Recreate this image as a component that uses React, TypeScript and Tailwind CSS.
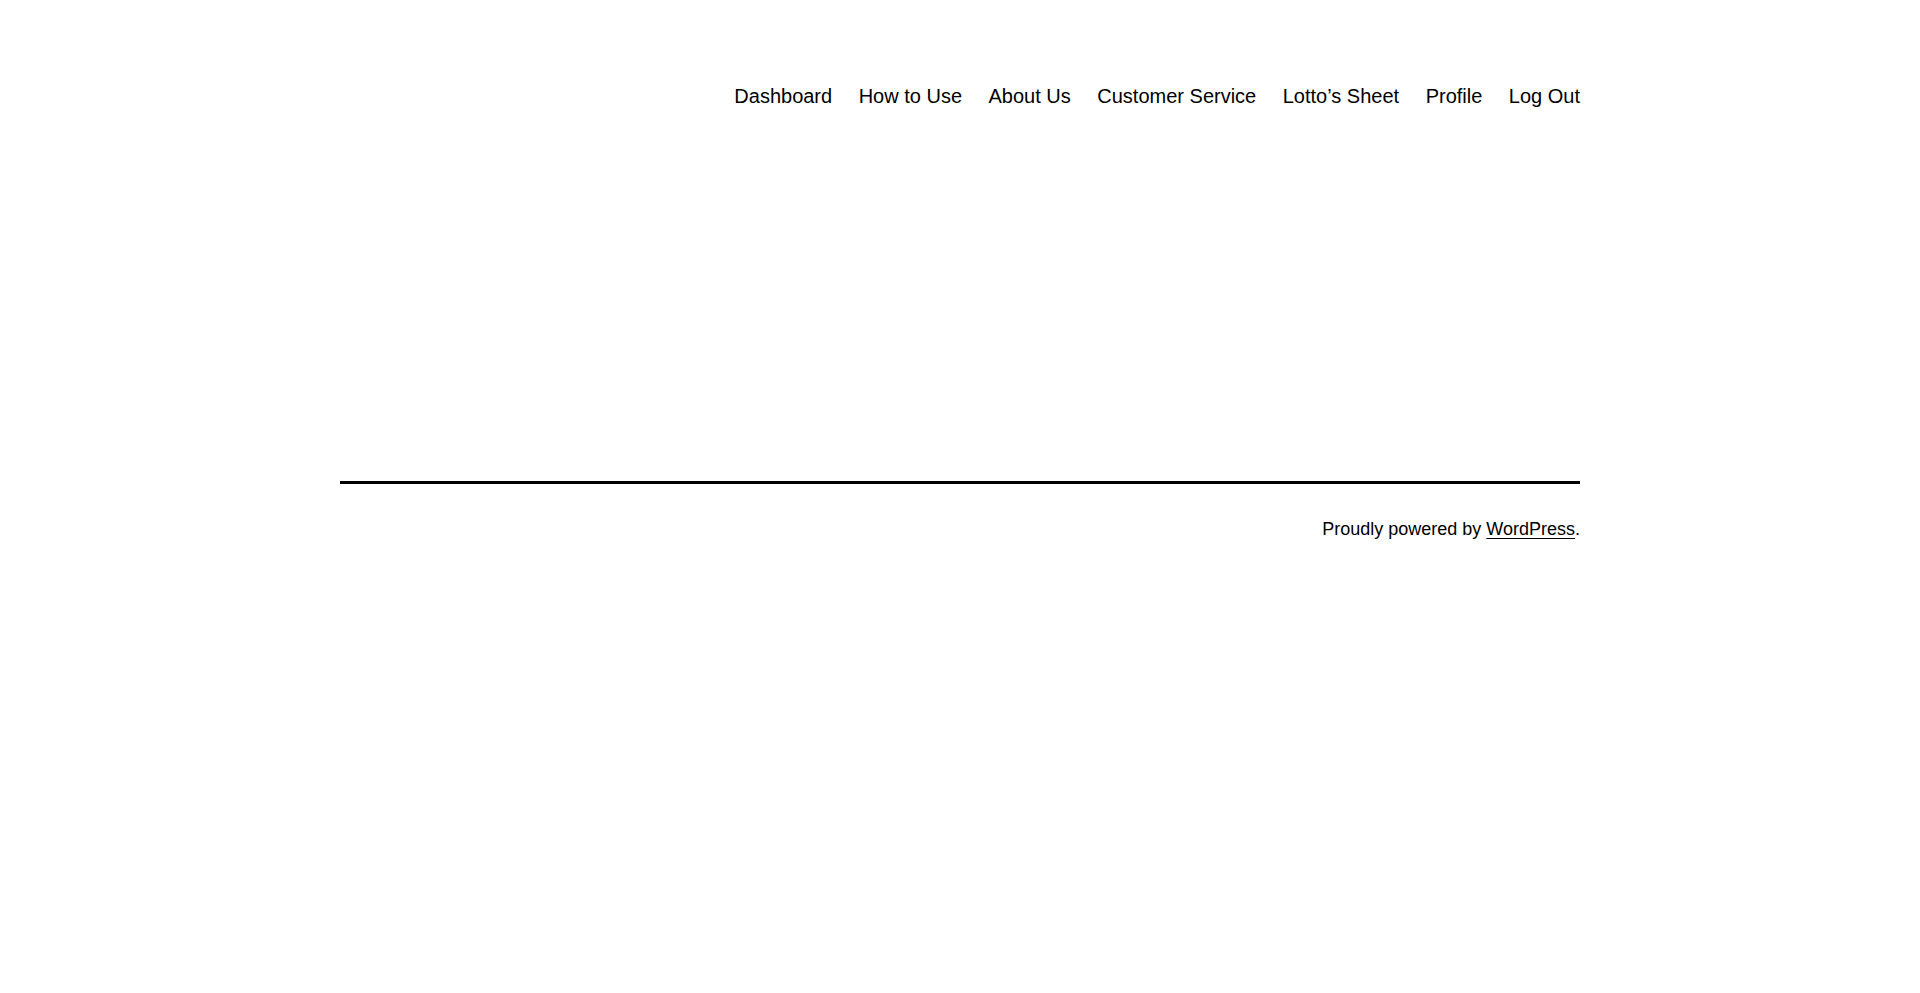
const navItems = ['Dashboard', 'How to Use', 'About Us', 'Customer Service', 'Lotto\u2019s Sheet', 'Profile', 'Log Out'];

export default function App() {
  return (
    <div className="min-h-screen bg-white text-black" style={{ fontFamily: '"Liberation Sans", Arial, sans-serif' }}>
      <div className="mx-auto w-[1240px]">
        {/* header */}
        <header className="flex justify-end pt-[83px]">
          <nav>
            <ul className="flex gap-[26.5px] text-[20px] leading-[26px]">
              {navItems.map((item) => (
                <li key={item}>
                  <a href="#" className="text-black">
                    {item}
                  </a>
                </li>
              ))}
            </ul>
          </nav>
        </header>

        {/* main content (empty) */}
        <main className="h-[372px]"></main>

        {/* footer */}
        <footer className="border-t-[3px] border-black pt-[32px]">
          <p className="text-right text-[18px] leading-[27px]">
            Proudly powered by{' '}
            <a href="#" className="underline decoration-1 underline-offset-[3px]">
              WordPress
            </a>
            .
          </p>
        </footer>
      </div>
    </div>
  );
}
